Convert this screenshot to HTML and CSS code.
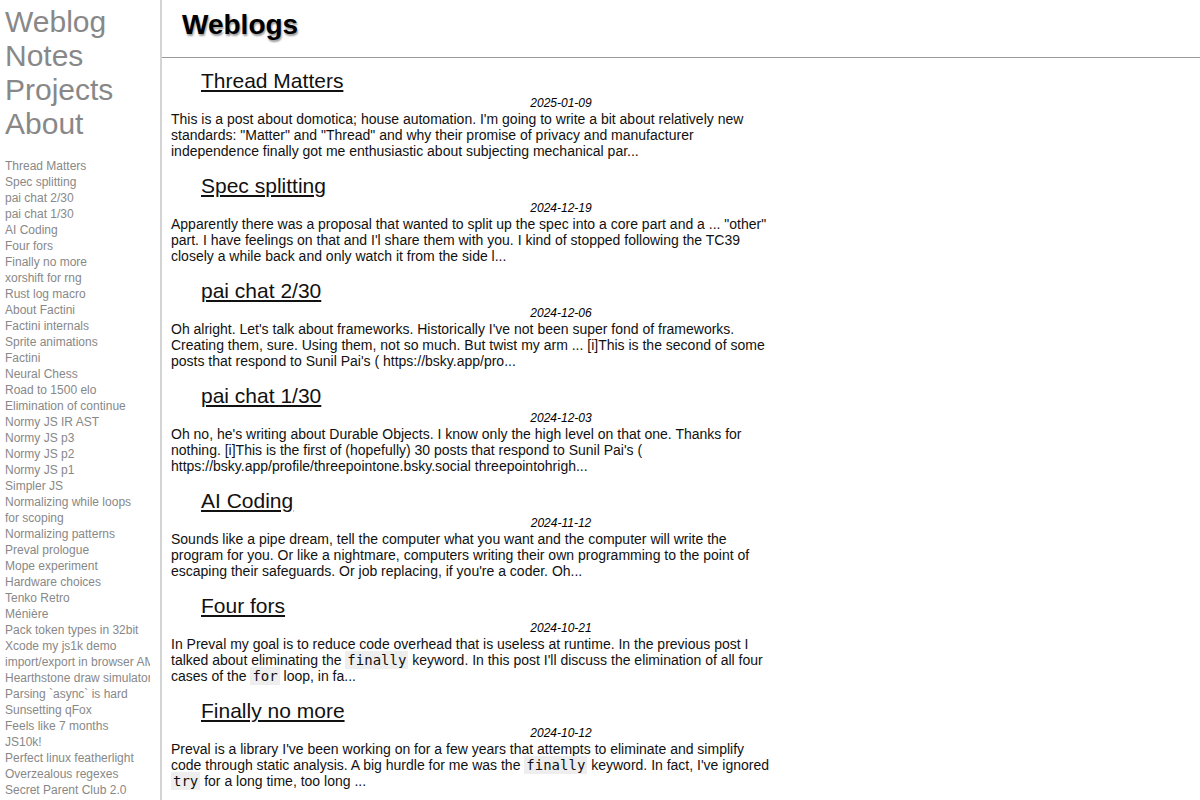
FILE: index.html
```html
<!DOCTYPE html>
<html>
<head>
    <title>Weblogs</title>
    <link rel="stylesheet" href="styles.css">
</head>
<body>
    <div class="page">
        <div class="sidebar">
            <nav class="main-nav">
                <a href="#">Weblog</a>
                <a href="#">Notes</a>
                <a href="#">Projects</a>
                <a href="#">About</a>
            </nav>
            <ul class="post-index">
                <li><a href="#">Thread Matters</a></li>
                <li><a href="#">Spec splitting</a></li>
                <li><a href="#">pai chat 2/30</a></li>
                <li><a href="#">pai chat 1/30</a></li>
                <li><a href="#">AI Coding</a></li>
                <li><a href="#">Four fors</a></li>
                <li><a href="#">Finally no more</a></li>
                <li><a href="#">xorshift for rng</a></li>
                <li><a href="#">Rust log macro</a></li>
                <li><a href="#">About Factini</a></li>
                <li><a href="#">Factini internals</a></li>
                <li><a href="#">Sprite animations</a></li>
                <li><a href="#">Factini</a></li>
                <li><a href="#">Neural Chess</a></li>
                <li><a href="#">Road to 1500 elo</a></li>
                <li><a href="#">Elimination of continue</a></li>
                <li><a href="#">Normy JS IR AST</a></li>
                <li><a href="#">Normy JS p3</a></li>
                <li><a href="#">Normy JS p2</a></li>
                <li><a href="#">Normy JS p1</a></li>
                <li><a href="#">Simpler JS</a></li>
                <li><a href="#">Normalizing while loops<br>for scoping</a></li>
                <li><a href="#">Normalizing patterns</a></li>
                <li><a href="#">Preval prologue</a></li>
                <li><a href="#">Mope experiment</a></li>
                <li><a href="#">Hardware choices</a></li>
                <li><a href="#">Tenko Retro</a></li>
                <li><a href="#">Ménière</a></li>
                <li><a href="#">Pack token types in 32bit</a></li>
                <li><a href="#">Xcode my js1k demo</a></li>
                <li><a href="#">import/export in browser AMD</a></li>
                <li><a href="#">Hearthstone draw simulator</a></li>
                <li><a href="#">Parsing `async` is hard</a></li>
                <li><a href="#">Sunsetting qFox</a></li>
                <li><a href="#">Feels like 7 months</a></li>
                <li><a href="#">JS10k!</a></li>
                <li><a href="#">Perfect linux featherlight</a></li>
                <li><a href="#">Overzealous regexes</a></li>
                <li><a href="#">Secret Parent Club 2.0</a></li>
            </ul>
        </div>

        <div class="content">
            <div class="header">
                <h1>Weblogs</h1>
            </div>

            <div class="posts">
                <div class="post">
                    <h2><a href="#">Thread Matters</a></h2>
                    <div class="date">2025-01-09</div>
                    <p>This is a post about domotica; house automation. I'm going to write a bit about relatively new standards: "Matter" and "Thread" and why their promise of privacy and manufacturer independence finally got me enthusiastic about subjecting mechanical par...</p>
                </div>
                <div class="post">
                    <h2><a href="#">Spec splitting</a></h2>
                    <div class="date">2024-12-19</div>
                    <p>Apparently there was a proposal that wanted to split up the spec into a core part and a ... "other" part. I have feelings on that and I'l share them with you. I kind of stopped following the TC39 closely a while back and only watch it from the side l...</p>
                </div>
                <div class="post">
                    <h2><a href="#">pai chat 2/30</a></h2>
                    <div class="date">2024-12-06</div>
                    <p>Oh alright. Let's talk about frameworks. Historically I've not been super fond of frameworks. Creating them, sure. Using them, not so much. But twist my arm ... [i]This is the second of some posts that respond to Sunil Pai's ( https://bsky.app/pro...</p>
                </div>
                <div class="post">
                    <h2><a href="#">pai chat 1/30</a></h2>
                    <div class="date">2024-12-03</div>
                    <p>Oh no, he's writing about Durable Objects. I know only the high level on that one. Thanks for nothing. [i]This is the first of (hopefully) 30 posts that respond to Sunil Pai's ( https://bsky.app/profile/threepointone.bsky.social threepointohrigh...</p>
                </div>
                <div class="post">
                    <h2><a href="#">AI Coding</a></h2>
                    <div class="date">2024-11-12</div>
                    <p>Sounds like a pipe dream, tell the computer what you want and the computer will write the program for you. Or like a nightmare, computers writing their own programming to the point of escaping their safeguards. Or job replacing, if you're a coder. Oh...</p>
                </div>
                <div class="post">
                    <h2><a href="#">Four fors</a></h2>
                    <div class="date">2024-10-21</div>
                    <p>In Preval my goal is to reduce code overhead that is useless at runtime. In the previous post I talked about eliminating the <code>finally</code> keyword. In this post I'll discuss the elimination of all four cases of the <code>for</code> loop, in fa...</p>
                </div>
                <div class="post">
                    <h2><a href="#">Finally no more</a></h2>
                    <div class="date">2024-10-12</div>
                    <p>Preval is a library I've been working on for a few years that attempts to eliminate and simplify code through static analysis. A big hurdle for me was the <code>finally</code> keyword. In fact, I've ignored <code>try</code> for a long time, too long ...</p>
                </div>
            </div>
        </div>
    </div>
</body>
</html>
```

FILE: styles.css
```css
body {
    margin: 0;
    font-family: "Liberation Sans", Arial, sans-serif;
    color: #000;
    background-color: #fff;
}

a {
    color: inherit;
}

.page {
    display: flex;
    align-items: stretch;
    min-height: 100vh;
}

/* left column with site nav and list of all posts */
.sidebar {
    width: 160px;
    flex-shrink: 0;
    border-right: 2px solid #d4d4d4;
}

.main-nav {
    display: flex;
    flex-direction: column;
    padding: 5px 0 0 5px;
}

.main-nav a {
    font-size: 30px;
    color: #888;
    text-decoration: none;
}

.post-index {
    list-style: none;
    margin: 17px 0 0 0;
    padding: 0 0 0 5px;
    width: 145px;
    overflow: hidden;
    white-space: nowrap;
}

.post-index li {
    font-size: 12px;
    line-height: 16px;
}

.post-index a {
    color: #888;
    text-decoration: none;
}

.content {
    flex: 1;
}

.header {
    height: 57px;
    border-bottom: 1px solid #999;
    padding-left: 20px;
}

.header h1 {
    margin: 0;
    padding-top: 9px;
    font-size: 28px;
    line-height: 32px;
    text-shadow: 1px 2px 2px #999;
}

.posts {
    padding: 10px 0 0 9px;
}

.post {
    margin-bottom: 14px;
}

.post h2 {
    margin: 0 0 0 30px;
    font-size: 21px;
    font-weight: normal;
    line-height: 26px;
}

.post h2 a {
    color: #111;
}

.date {
    width: 780px;
    text-align: center;
    font-size: 12px;
    font-style: italic;
    line-height: 15px;
    margin-top: 2px;
}

.post p {
    margin: 0;
    max-width: 600px;
    font-size: 14px;
    line-height: 16px;
    color: #111;
}

code {
    font-family: "DejaVu Sans Mono", monospace;
    font-size: 14px;
    background-color: #eee;
    padding: 1px 2px;
}
```
